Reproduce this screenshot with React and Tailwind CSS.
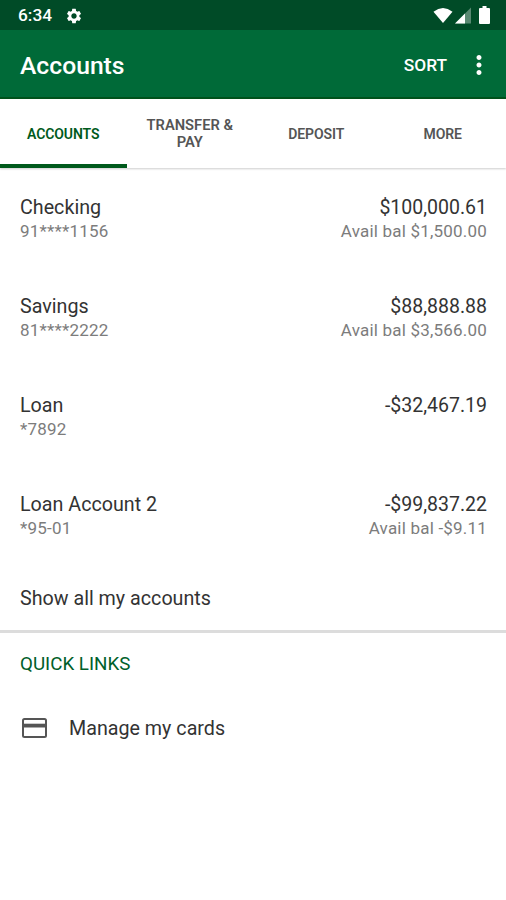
import { MdMoreVert, MdSettings } from 'react-icons/md';

const tabs = ['Accounts', 'Transfer & Pay', 'Deposit', 'More'];

const accounts = [
  { name: 'Checking', number: '91****1156', balance: '$100,000.61', available: '$1,500.00' },
  { name: 'Savings', number: '81****2222', balance: '$88,888.88', available: '$3,566.00' },
  { name: 'Loan', number: '*7892', balance: '-$32,467.19' },
  { name: 'Loan Account 2', number: '*95-01', balance: '-$99,837.22', available: '-$9.11' },
];

const StatusBar = () => (
  <div className="flex h-[30px] items-center justify-between bg-[#004b27] pl-[18px] pr-[16px] text-white">
    <div className="flex items-center gap-[13px] pt-[2px]">
      <span className="text-[17.3px] leading-none font-medium">6:34</span>
      <MdSettings className="size-[18px]" />
    </div>
    <div className="flex items-center">
      <svg className="h-[17px] w-[20px]" viewBox="0 0 21 17">
        <path d="M0.5 4.5Q10.5 -3.2 20.5 4.5L10.5 16.5Z" fill="currentColor" />
      </svg>
      <svg className="ml-[2px] h-[17px] w-4" viewBox="0 0 16 17">
        <path d="M16 0.5V16.5H0Z" fill="currentColor" fillOpacity="0.35" />
        <path d="M10 6.5V16.5H0Z" fill="currentColor" />
      </svg>
      <svg className="ml-2 h-[18px] w-[11px]" viewBox="0 0 11 18">
        <path d="M3.5 0H7.5V2H10Q11 2 11 3V17Q11 18 10 18H1Q0 18 0 17V3Q0 2 1 2H3.5Z" fill="currentColor" />
      </svg>
    </div>
  </div>
);

const CardIcon = () => (
  <svg className="mr-[22px] ml-[2px] h-5 w-[25px] text-[#555555]" viewBox="0 0 25 20" fill="none">
    <rect x="1" y="1" width="23" height="18" rx="1.5" stroke="currentColor" strokeWidth="2" />
    <path d="M1 7.6H24" stroke="currentColor" strokeWidth="3.8" />
  </svg>
);

const AccountRow = ({ account }) => (
  <li className="flex h-[99px] justify-between pt-[27px]">
    <div>
      <div className="text-[19.7px] leading-[25px] text-[#333333]">{account.name}</div>
      <div className="text-[17px] leading-[23px] tracking-[0.2px] text-[#7c7c7c]">{account.number}</div>
    </div>
    <div className="text-right">
      <div className="text-[19.5px] leading-[25px] text-[#333333]">{account.balance}</div>
      {account.available && (
        <div className="text-[17px] leading-[23px] tracking-[0.2px] text-[#7c7c7c]">
          Avail bal {account.available}
        </div>
      )}
    </div>
  </li>
);

const App = () => {
  return (
    <div className="flex min-h-screen w-full flex-col bg-white font-[Roboto,sans-serif]">
      <StatusBar />

      <header className="flex h-[69px] items-center justify-between border-b-2 border-[#00521c] bg-[#006a38] pr-[12px] pl-5 text-white">
        <h1 className="pt-[6px] text-[24.7px] leading-none font-medium">Accounts</h1>
        <div className="flex items-center gap-[17px] pt-[2px]">
          <button className="pt-[2px] text-[17.3px] leading-none font-medium">SORT</button>
          <button aria-label="More options">
            <MdMoreVert className="size-[30px]" />
          </button>
        </div>
      </header>

      {/* Tabs */}
      <nav className="grid h-[69px] grid-cols-4 shadow-[0_1px_2px_rgba(0,0,0,0.2)]">
        {tabs.map((tab, index) => (
          <button
            key={tab}
            className={`flex items-center justify-center border-b-4 px-3 pt-[5px] text-center leading-[17px] font-semibold uppercase ${
              index === 0 ? 'border-[#005a1c] text-[#005a1c]' : 'border-transparent text-[#555555]'
            } ${tab.includes(' ') ? 'text-[14.7px]' : 'text-[14px] tracking-[-0.1px]'}`}
          >
            {tab}
          </button>
        ))}
      </nav>

      <main>
        <ul className="pr-[19px] pl-5">
          {accounts.map((account) => (
            <AccountRow key={account.number} account={account} />
          ))}
        </ul>

        <div className="flex h-[69px] items-center border-b-[3px] border-[#dcdcdc] px-5 pt-[3px] text-[19.7px] text-[#333333]">
          Show all my accounts
        </div>

        {/* Quick links */}
        <h2 className="px-5 pt-[18px] text-[18.8px] leading-[26px] text-[#00602a]">QUICK LINKS</h2>
        <div className="flex items-center px-5 pt-[34px] text-[19.7px] leading-[30px] text-[#333333]">
          <CardIcon />
          <span className="pt-[3px]">Manage my cards</span>
        </div>
      </main>
    </div>
  );
};

export default App;
